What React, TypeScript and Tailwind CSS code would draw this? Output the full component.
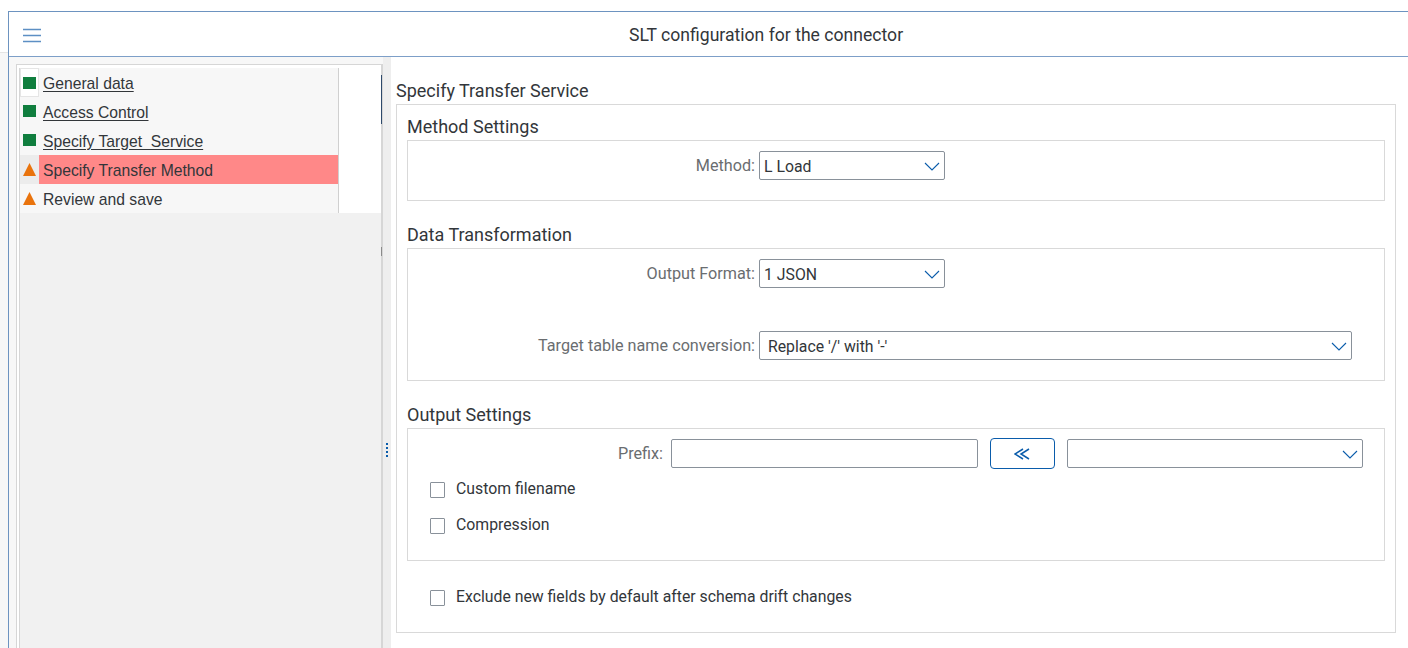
const treeItems = [
  { label: "General data", icon: "ok", link: true, first: true },
  { label: "Access Control", icon: "ok", link: true },
  { label: "Specify Target  Service", icon: "ok", link: true },
  { label: "Specify Transfer Method", icon: "warn", selected: true },
  { label: "Review and save", icon: "warn" },
];

function Chevron() {
  return (
    <svg width="16" height="10" viewBox="0 0 16 10" fill="none" className="shrink-0">
      <path d="M1 2l7 7 7-7" stroke="#0a5cab" strokeWidth="1.1" />
    </svg>
  );
}

function Select({ value, width, padding = "pl-1" }: { value: string; width: string; padding?: string }) {
  return (
    <div className={`${width} ${padding} h-[29px] pr-[4px] flex items-center justify-between border border-[#89919a] rounded-[2px] bg-white text-[15.8px] text-[#32363a] shrink-0`}>
      <span className="pt-[2px]">{value}</span>
      <Chevron />
    </div>
  );
}

function Check({ label, className }: { label: string; className: string }) {
  return (
    <div className={`flex items-center ${className}`}>
      <div className="w-[15px] h-[16px] border border-[#89919a] rounded-[1px] bg-white shrink-0 mt-[1px]" />
      <span className="ml-[11px] text-[15.8px] leading-[18px] text-[#32363a]">{label}</span>
    </div>
  );
}

function FormRow({ label, children, className }: { label: string; children: React.ReactNode; className: string }) {
  return (
    <div className={`flex items-center ${className}`}>
      <div className="w-[351px] pr-[4px] pt-[2px] text-right text-[16.2px] text-[#6a6d70] shrink-0">{label}</div>
      {children}
    </div>
  );
}

function Section({ title, height, titleClass, children }: { title: string; height: string; titleClass: string; children: React.ReactNode }) {
  return (
    <div>
      <div className={`text-[18px] leading-[22px] text-[#32363a] ${titleClass}`}>{title}</div>
      <div className={`${height} mt-[2px] border border-[#d9d9d9]`}>{children}</div>
    </div>
  );
}

export default function App() {
  return (
    <div className="w-[1408px] h-[648px] overflow-hidden bg-white flex flex-col font-['Roboto',sans-serif]">
      <div className="h-[11px] shrink-0" />
      <div className="flex flex-1 min-h-0">
        {/* strip left of the window */}
        <div className="w-[8px] shrink-0 flex flex-col">
          <div className="h-[41px] bg-white" />
          <div className="flex-1 bg-[#f7f7f7] border-t border-[#e5e5e5]" />
        </div>

        <div className="flex-1 flex flex-col border-l border-t border-[#6d93c0] min-w-0">
          {/* header */}
          <div className="h-[45px] shrink-0 flex items-center border-b border-[#7d9fc8] relative">
            <svg width="18" height="15" viewBox="0 0 18 15" className="ml-[14px] mt-[2px]">
              <path d="M0 1.5h18M0 7.5h18M0 13.5h18" stroke="#5d8fc4" strokeWidth="1.4" />
            </svg>
            <div className="absolute left-[620px] top-[11px] text-[17.6px] leading-[24px] text-[#32363a] whitespace-nowrap">
              SLT configuration for the connector
            </div>
          </div>

          <div className="flex flex-1 min-h-0">
            {/* left tree panel */}
            <div className="w-[374px] shrink-0 bg-[#f7f7f7] pl-[7px] pt-[7px]">
              <div className="h-full border-l border-t border-r-2 border-[#d6d6d6] bg-white pl-[2px] pt-[3px] flex flex-col relative font-['Liberation_Sans',sans-serif]">
                <div className="flex h-[145px] shrink-0 border-l border-[#d6d6d6]">
                  <div className="w-[319px] bg-[#f7f7f7] border-r border-[#d0d0d0] flex flex-col shrink-0">
                    {treeItems.map((item) => (
                      <div key={item.label} className="h-[29px] flex">
                        <div className={`w-[19px] shrink-0 pt-[8px] ${item.first ? "border border-[#e5e5e5] bg-white pl-[2px]" : "pl-[3px]"} ${item.selected ? "bg-[#ececec]" : ""}`}>
                          {item.icon === "ok" ? (
                            <div className="w-[13px] h-[12px] bg-[#107e3e]" />
                          ) : (
                            <svg width="13" height="13" viewBox="0 0 13 13">
                              <path d="M6.5 0L13 13H0z" fill="#e9730c" />
                            </svg>
                          )}
                        </div>
                        <div className={`flex-1 pl-[4px] text-[15.7px] leading-[32px] text-[#32363a] whitespace-pre ${item.selected ? "bg-[#ff8888]" : ""}`}>
                          {item.link ? <span className="underline underline-offset-2">{item.label}</span> : item.label}
                        </div>
                      </div>
                    ))}
                  </div>
                  <div className="flex-1 bg-white" />
                </div>
                <div className="flex-1 bg-[#f1f1f1] border-l border-[#d6d6d6]" />
                <div className="absolute right-[-1px] top-[10px] w-[1px] h-[49px] bg-[#2e4a6b]" />
                <div className="absolute right-[-1px] top-[182px] w-[1px] h-[9px] bg-[#8a8a8a]" />
              </div>
            </div>

            {/* splitter */}
            <div className="w-[8px] shrink-0 bg-[#eeeeee] flex flex-col items-center pt-[386px] gap-[2px]">
              {[0, 1, 2, 3].map((i) => (
                <div key={i} className="w-[2px] h-[2px] bg-[#0a5cab]" />
              ))}
            </div>

            {/* right content */}
            <div className="flex-1 min-w-0 pl-[5px] pr-[12px] pt-[21px]">
              <div className="text-[18px] leading-[26px] text-[#32363a]">Specify Transfer Service</div>
              <div className="h-[529px] border border-[#d9d9d9] px-[10px] pt-[11px]">
                <Section title="Method Settings" height="h-[61px]" titleClass="">
                  <FormRow label="Method:" className="pt-[10px]">
                    <Select value="L Load" width="w-[186px]" />
                  </FormRow>
                </Section>
                <Section title="Data Transformation" height="h-[133px]" titleClass="mt-[23px]">
                  <FormRow label="Output Format:" className="pt-[10px]">
                    <Select value="1 JSON" width="w-[186px]" />
                  </FormRow>
                  <FormRow label="Target table name conversion:" className="pt-[43px]">
                    <Select value="Replace '/' with '-'" width="w-[593px]" padding="pl-2" />
                  </FormRow>
                </Section>
                <Section title="Output Settings" height="h-[133px]" titleClass="mt-[23px]">
                  <div className="flex items-center pt-[9px]">
                    <div className="w-[255px] pt-[2px] text-right text-[16.2px] text-[#6a6d70] shrink-0">Prefix:</div>
                    <div className="w-[307px] h-[29px] ml-[8px] border border-[#89919a] rounded-[2px] shrink-0" />
                    <div className="w-[65px] h-[31px] ml-[12px] border border-[#0a5cab] rounded-[4px] flex items-center justify-center shrink-0">
                      <svg width="17" height="12" viewBox="0 0 17 12" fill="none">
                        <path d="M9 1L1 6l8 5M15 1L7 6l8 5" stroke="#0a5cab" strokeWidth="1.5" />
                      </svg>
                    </div>
                    <div className="ml-[12px]">
                      <Select value="" width="w-[296px]" />
                    </div>
                  </div>
                  <Check label="Custom filename" className="ml-[22px] mt-[11px]" />
                  <Check label="Compression" className="ml-[22px] mt-[18px]" />
                </Section>
                <Check label="Exclude new fields by default after schema drift changes" className="ml-[23px] mt-[27px]" />
              </div>
            </div>
          </div>
        </div>
      </div>
    </div>
  );
}
